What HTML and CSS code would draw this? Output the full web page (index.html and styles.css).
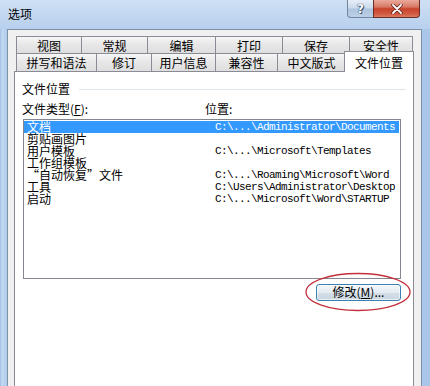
FILE: index.html
```html
<!DOCTYPE html>
<html lang="zh-CN">
<head>
<meta charset="utf-8">
<title>选项</title>
<link rel="stylesheet" href="styles.css">
</head>
<body>
<div class="window">
  <div class="titlebar">
    <span class="title">选项</span>
    <div class="caption">
      <div class="cap-btn help">?</div>
      <div class="cap-btn close">
        <svg width="12" height="10" viewBox="0 0 12 10">
          <path d="M2 1 L10 9 M10 1 L2 9" stroke="#5a1e16" stroke-width="3.4" stroke-linecap="round"/>
          <path d="M2 1 L10 9 M10 1 L2 9" stroke="#ffffff" stroke-width="1.8" stroke-linecap="round"/>
        </svg>
      </div>
    </div>
  </div>
  <div class="client">
    <div class="tabs">
      <div class="tab-row row1">
        <div class="tab w65">视图</div>
        <div class="tab w66">常规</div>
        <div class="tab w68">编辑</div>
        <div class="tab w67">打印</div>
        <div class="tab w67">保存</div>
        <div class="tab w64 last">安全性</div>
      </div>
      <div class="tab-row row2">
        <div class="tab w80">拼写和语法</div>
        <div class="tab w55">修订</div>
        <div class="tab w64">用户信息</div>
        <div class="tab w62">兼容性</div>
        <div class="tab w68">中文版式</div>
        <div class="tab selected">文件位置</div>
      </div>
    </div>
    <div class="panel">
      <div class="group-head"><span>文件位置</span><div class="rule"></div></div>
      <div class="labels"><span>文件类型(<u>F</u>):</span><span>位置:</span></div>
      <div class="listbox">
        <div class="row sel"><span>文档</span><span class="path">C:\...\Administrator\Documents</span></div>
        <div class="row"><span>剪贴画图片</span><span class="path"></span></div>
        <div class="row"><span>用户模板</span><span class="path">C:\...\Microsoft\Templates</span></div>
        <div class="row"><span>工作组模板</span><span class="path"></span></div>
        <div class="row"><span>“自动恢复”文件</span><span class="path">C:\...\Roaming\Microsoft\Word</span></div>
        <div class="row"><span>工具</span><span class="path">C:\Users\Administrator\Desktop</span></div>
        <div class="row"><span>启动</span><span class="path">C:\...\Microsoft\Word\STARTUP</span></div>
      </div>
      <div class="btn-row">
        <div class="btn-wrap">
          <div class="button">修改(<u>M</u>)...</div>
          <svg class="mark" width="108" height="40" viewBox="0 0 108 40">
            <ellipse cx="54" cy="20" rx="52" ry="18.5" fill="none" stroke="#c2303c" stroke-width="1.3"/>
          </svg>
        </div>
      </div>
    </div>
  </div>
</div>
</body>
</html>
```

FILE: styles.css
```css
html, body {
  margin: 0;
  padding: 0;
}
body {
  width: 430px;
  height: 386px;
  overflow: hidden;
  font-family: "Noto Sans CJK SC", "Noto Sans", sans-serif;
  font-size: 12px;
  color: #000;
}
.window {
  width: 430px;
  height: 386px;
  box-sizing: border-box;
  padding: 0 8px 0 7px;
  display: flex;
  flex-direction: column;
  background: linear-gradient(90deg, #9dbde3 0px, #c3d9f2 2px, #b2cdec 6px, #c9dcf2 40%, #b9d1ee 70%, #a9c6e9 100%);
}
.titlebar {
  height: 29px;
  flex: none;
  display: flex;
  justify-content: space-between;
  align-items: flex-start;
  margin: 0 -8px 0 -7px;
  padding: 0 10px 0 8px;
  background: linear-gradient(180deg, #cfe0f4 0%, #c0d6f0 60%, #b8d0ee 100%);
}
.title {
  padding-top: 7px;
  line-height: 14px;
  color: #000;
}
.caption {
  display: flex;
}
.cap-btn {
  box-sizing: border-box;
  height: 18px;
  display: flex;
  align-items: center;
  justify-content: center;
}
.help {
  width: 26px;
  border: 1px solid #6f86a3;
  border-top: none;
  border-right: none;
  border-radius: 0 0 0 4px;
  background: linear-gradient(180deg, #e6eef8 0%, #cbdaeb 48%, #aec3dd 52%, #bdd0e7 100%);
  color: #fff;
  font-family: "DejaVu Sans", sans-serif;
  font-weight: bold;
  font-size: 12px;
  line-height: 14px;
  text-shadow: 0 0 1px #24384f, 0 0 1px #24384f, 1px 1px 0 #4a5f7a;
}
.close {
  width: 47px;
  border: 1px solid #6b2d24;
  border-top: none;
  border-radius: 0 0 4px 0;
  background: linear-gradient(180deg, #eaa99b 0%, #d97a66 40%, #c7432c 52%, #d0583f 80%, #dd7b60 100%);
}
.client {
  flex: 1;
  background: #f0f0f0;
  border: 1px solid #7d91a9;
  border-bottom: none;
  padding: 6px 7px 0 6px;
  display: flex;
  flex-direction: column;
  min-height: 0;
}
.tabs {
  flex: none;
}
.tab-row {
  display: flex;
  align-items: flex-start;
  padding-left: 2px;
}
.row1 {
  height: 17px;
}
.row2 {
  height: 18px;
}
.tab {
  box-sizing: border-box;
  flex: none;
  border-top: 1px solid #898c95;
  border-left: 1px solid #898c95;
  background: linear-gradient(180deg, #f6f6f6 0%, #e8e8e8 45%, #dedede 100%);
  text-align: center;
  line-height: 14px;
  white-space: nowrap;
}
.row1 .tab {
  height: 17px;
  padding-top: 2px;
}
.row2 .tab {
  height: 18px;
  padding-top: 2px;
}
.tab.last {
  border-right: 1px solid #898c95;
}
.w55 { width: 55px; }
.w62 { width: 62px; }
.w64 { width: 64px; }
.w65 { width: 65px; }
.w66 { width: 66px; }
.w67 { width: 67px; }
.w68 { width: 68px; }
.w80 { width: 80px; }
.row2 .tab.selected {
  position: relative;
  width: 70px;
  height: 21px;
  margin: -2px 0 -1px -1px;
  padding-top: 4px;
  border-right: 1px solid #898c95;
  background: #fff;
}
.panel {
  flex: 1;
  background: #fff;
  border: 1px solid #898c95;
  border-bottom: none;
  padding: 10px 12px 0 7px;
  display: flex;
  flex-direction: column;
}
.group-head {
  display: flex;
  align-items: center;
  gap: 9px;
  line-height: 14px;
  margin-right: -5px;
}
.rule {
  flex: 1;
  height: 1px;
  background: #dde4ea;
}
.labels {
  display: grid;
  grid-template-columns: 183px 1fr;
  line-height: 14px;
  margin-top: 6px;
}
.listbox {
  margin: 3px 0 0 1px;
  height: 160px;
  box-sizing: border-box;
  border: 1px solid #828790;
  padding: 1px 1px 1px 0;
}
.row {
  display: grid;
  grid-template-columns: 188px 1fr;
  height: 12px;
  line-height: 12px;
  padding-left: 3px;
  white-space: nowrap;
}
.row.sel {
  background: #3399ff;
  color: #fff;
}
.path {
  font-family: "Liberation Mono", "DejaVu Sans Mono", monospace;
  font-size: 11px;
  letter-spacing: -0.6px;
}
.btn-row {
  display: flex;
  justify-content: flex-end;
  margin-top: 5px;
}
.btn-wrap {
  position: relative;
}
.button {
  box-sizing: border-box;
  width: 85px;
  height: 17px;
  border: 1px solid #3c7fb1;
  border-radius: 3px;
  background: linear-gradient(180deg, #f2f6f9 0%, #e4ecf2 50%, #d3dee7 52%, #c9d6e0 100%);
  text-align: center;
  line-height: 14px;
  box-shadow: inset 0 0 0 1px rgba(255,255,255,0.6);
}
.mark {
  position: absolute;
  left: -12px;
  top: -12px;
}
```
